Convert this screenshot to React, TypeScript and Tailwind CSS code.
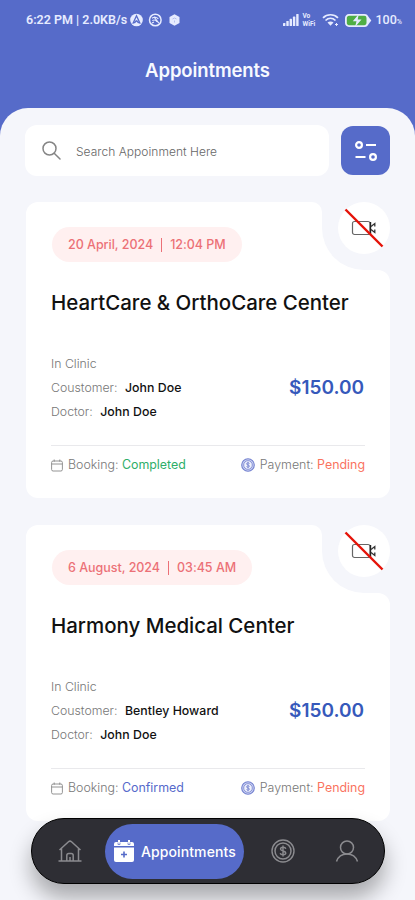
import type { ReactNode } from "react";

type Appointment = {
  date: string;
  time: string;
  clinic: string;
  customer: string;
  doctor: string;
  price: string;
  booking: string;
  bookingColor: string;
  payment: string;
};

const appointments: Appointment[] = [
  {
    date: "20 April, 2024",
    time: "12:04 PM",
    clinic: "HeartCare & OrthoCare Center",
    customer: "John Doe",
    doctor: "John Doe",
    price: "$150.00",
    booking: "Completed",
    bookingColor: "text-[#2eae68]",
    payment: "Pending",
  },
  {
    date: "6 August, 2024",
    time: "03:45 AM",
    clinic: "Harmony Medical Center",
    customer: "Bentley Howard",
    doctor: "John Doe",
    price: "$150.00",
    booking: "Confirmed",
    bookingColor: "text-[#5669cb]",
    payment: "Pending",
  },
];

const StatusBar = () => (
  <div className="flex h-10 items-center justify-between pl-[26px] pr-[13px] font-['Roboto',sans-serif] text-[#e6ebff]">
    <div className="flex items-center">
      <p className="whitespace-nowrap text-[12.5px] font-semibold">6:22 PM | 2.0KB/s</p>
      <svg className="ml-[3px]" width="51" height="14" viewBox="0 0 51 14" fill="none">
        <circle cx="6.5" cy="7" r="6.3" fill="#e6ebff" />
        <path d="M2.8 10.8 6.5 2.8l3.7 8M6.5 7.5l-2.2 2.6M6.5 7.5l2.2 2.6" stroke="#566bc9" strokeWidth="1.3" />
        <circle cx="25.3" cy="7" r="5.8" stroke="currentColor" strokeWidth="1.5" />
        <path d="M22 5.2c2-1.6 5-1.3 6.3.8M22.3 7.6c1.6-1 3.4-.5 4.6 1M22 10l2-1M24 3.8l4.8 6.4" stroke="currentColor" strokeWidth="1.1" />
        <path d="m44.5 1.2 5 2.9v5.8l-5 2.9-5-2.9V4.100z" fill="currentColor" />
        <path d="m42.500 6 2-1 2 1M44.500 7.500v2" stroke="#a9b5e8" strokeWidth=".8" />
      </svg>
    </div>
    <div className="flex items-center">
      <svg width="16" height="12" viewBox="0 0 16 12" fill="currentColor">
        <rect x="0" y="9" width="2.4" height="3" rx=".6" />
        <rect x="3.300" y="7" width="2.400" height="5" rx=".6" />
        <rect x="6.600" y="4.800" width="2.400" height="7.200" rx=".6" />
        <rect x="9.900" y="2.600" width="2.400" height="9.400" rx=".6" />
        <rect x="13.200" y="0" width="2.400" height="12" rx=".6" />
      </svg>
      <div className="ml-1 w-[17px] text-[6.5px] font-bold leading-[8px]">
        <p>Vo</p>
        <p>WiFi</p>
      </div>
      <svg className="ml-[2px]" width="18" height="14" viewBox="0 0 18 14" fill="none" stroke="currentColor">
        <path d="M1 4.800C5.200.700 11.800.700 16 4.800" strokeWidth="1.700" />
        <path d="M3.500 7.500c3-2.800 7-2.800 10 0" strokeWidth="1.700" />
        <path d="m5.500 9.500 3 3.200 3-3.200c-1.800-1.500-4.200-1.500-6 0z" fill="currentColor" stroke="none" />
        <path d="M13 11.500h3M14.500 10v3" strokeWidth="1" />
      </svg>
      <svg className="ml-[5px]" width="27" height="13" viewBox="0 0 27 13">
        <rect x=".9" y=".9" width="21.500" height="11.200" rx="3" fill="#4fae45" stroke="#e6ebff" strokeWidth="1.800" />
        <path d="M22.500 1.500 26.300 6.500l-3.800 5z" fill="#e6ebff" />
        <path d="M13.800 0 7.800 7.300h3.700L10 13l6.500-7.500h-3.800z" fill="#e6ebff" />
      </svg>
      <p className="ml-[4px] text-[12.5px] font-medium">
        100<span className="text-[7px]">%</span>
      </p>
    </div>
  </div>
);

const SearchBar = () => (
  <div className="flex gap-3 px-[25px]">
    <div className="flex h-[51px] flex-1 items-center rounded-xl bg-white pl-[17px]">
      <svg width="19" height="19" viewBox="0 0 19 19" fill="none" stroke="#858585" strokeWidth="1.5">
        <circle cx="7.500" cy="7.500" r="6.500" />
        <path d="m12.200 12.200 5.800 5.800" strokeLinecap="round" />
      </svg>
      <p className="ml-[15px] pt-[2px] text-xs font-light tracking-[0.03px] text-[#666]">Search Appoinment Here</p>
    </div>
    <button className="mt-px flex size-[49px] items-center justify-center rounded-xl bg-[#566bc9]">
      <svg width="24" height="22" viewBox="0 0 24 22" fill="none" stroke="white" strokeWidth="2.2">
        <circle cx="5" cy="5" r="2.900" />
        <path d="M12 5h10M1.500 17h10" />
        <circle cx="19" cy="17" r="2.900" />
      </svg>
    </button>
  </div>
);

// Cut-out in the top right corner that holds the video badge
const CardNotch = () => (
  <>
    <div className="absolute right-0 top-0 h-[68px] w-[68px] rounded-bl-[42px] bg-[#f5f6fb]" />
    <div className="absolute right-[68px] top-0 size-[10px] bg-[#f5f6fb]" />
    <div className="absolute right-[68px] top-0 size-[10px] rounded-tr-[10px] bg-white" />
    <div className="absolute right-0 top-[68px] size-3 bg-[#f5f6fb]" />
    <div className="absolute right-0 top-[68px] size-3 rounded-tr-xl bg-white" />
    <div className="absolute right-0 top-0 flex size-[52px] items-center justify-center rounded-full bg-white">
      <svg width="40" height="40" viewBox="0 0 40 40" fill="none">
        <rect x="8.500" y="13.500" width="17.500" height="13" rx="2" stroke="#666" strokeWidth="1.200" />
        <path d="M26.500 14v12" stroke="#222" strokeWidth="1.400" />
        <path d="m27 18.500 3.800-3v3M27 21.500l3.800 3v-3" stroke="#333" strokeWidth="1.300" />
        <path d="m1.500 1.500 37 37" stroke="#e51208" strokeWidth="2.400" />
      </svg>
    </div>
  </>
);

const CalendarIcon = () => (
  <svg width="12" height="13" viewBox="0 0 12 13" fill="none" stroke="#888" strokeWidth=".9">
    <rect x=".6" y="2" width="10.800" height="10" rx="1.500" />
    <path d="M.6 5h10.800M3.200.5v2.200M8.800.5v2.200" />
  </svg>
);

const PaymentIcon = () => (
  <svg width="14" height="14" viewBox="0 0 14 14" fill="none" stroke="#7482d0">
    <circle cx="7" cy="7" r="6.300" strokeWidth="1.100" fill="#c9cff0" />
    <circle cx="7" cy="7" r="4.300" strokeWidth=".8" fill="#eff1fb" />
    <path d="M8.500 5.500c-.8-1-3-.8-3 .4 0 1.400 3 .8 3 2.200 0 1.200-2.200 1.400-3 .4M7 4v6" strokeWidth=".9" />
  </svg>
);

const InfoRow = ({ label, value }: { label: string; value: string }) => (
  <p className="whitespace-nowrap text-[#777]">
    {label}: <span className="ml-[4px] font-medium tracking-[0.05px] text-[#111]">{value}</span>
  </p>
);

const AppointmentCard = ({ item }: { item: Appointment }) => (
  <div className="relative h-[296px] rounded-xl bg-white px-[25px] pt-[25px]">
    <CardNotch />
    <div className="ml-px flex h-[35px] w-fit items-center rounded-full bg-[#fff0f0] px-4 pt-px text-[12.5px] font-medium tracking-[-0.02px] text-[#ec7077]">
      {item.date}
      <span className="mx-[8px] h-[14px] w-px bg-[#ec7077]" />
      {item.time}
    </div>
    <h2 className="mt-[25px] whitespace-nowrap text-[20.5px] font-medium leading-8 tracking-[-0.03px] text-[#111]">{item.clinic}</h2>
    <div className="mt-[33px] flex items-center justify-between">
      <div className="text-[12.3px] font-light leading-6 text-[#777]">
        <p>In Clinic</p>
        <InfoRow label="Coustomer" value={item.customer} />
        <InfoRow label="Doctor" value={item.doctor} />
      </div>
      <p className="mr-px text-[19px] font-semibold text-[#3659bb]">{item.price}</p>
    </div>
    <div className="mt-[21px] flex justify-between border-t border-[#e9e9ec] pt-[9px] text-[12.4px] font-light leading-5 text-[#777]">
      <div className="flex items-center">
        <CalendarIcon />
        <p className="ml-[5px]">
          Booking: <span className={`font-normal ${item.bookingColor}`}>{item.booking}</span>
        </p>
      </div>
      <div className="flex items-center">
        <PaymentIcon />
        <p className="ml-[5px]">
          Payment: <span className="font-normal text-[#fa735e]">{item.payment}</span>
        </p>
      </div>
    </div>
  </div>
);

const NavItem = ({ children }: { children: ReactNode }) => (
  <button className="flex size-8 items-center justify-center text-[#8b8b8f]">{children}</button>
);

const BottomNav = () => (
  <nav className="absolute bottom-4 left-[31px] flex h-[66px] w-[354px] items-center rounded-full border border-black bg-[#2e2e34] shadow-[0_14px_22px_rgba(0,0,0,0.32)]">
    <div className="ml-[22px]">
      <NavItem>
        <svg width="24" height="24" viewBox="0 0 24 24" fill="none" stroke="currentColor" strokeWidth="1.500">
          <path d="M.5 22h23M3.500 22V9.500M20.500 22V9.500M1.500 11 10.500 2.800q1.500-1.300 3 0L22.500 11" />
          <path d="M8.800 22v-5.500q0-2 2-2h2.400q2 0 2 2V22" />
          <path d="M12 18v4" />
        </svg>
      </NavItem>
    </div>
    <button className="ml-[19px] flex h-[55px] w-[139px] items-center rounded-full bg-[#566bc9] pl-[9px] text-white">
      <svg className="shrink-0" width="20" height="22" viewBox="0 0 20 22" fill="white">
        <path d="M0 7.500h20V20q0 2-2 2H2q-2 0-2-2z" />
        <path d="M0 6V4q0-2 2-2h2V0h2v2h8V0h2v2h2q2 0 2 2v2z" />
        <path d="M4 2.500v2h2v-2M14 2.500v2h2v-2" stroke="#566bc9" strokeWidth=".7" />
        <path d="M10 11.500v6M7 14.500h6" stroke="#566bc9" strokeWidth="1.600" />
      </svg>
      <span className="ml-[7px] text-[14px] font-medium tracking-[0.1px]">Appointments</span>
    </button>
    <div className="ml-[23px]">
      <NavItem>
        <svg width="24" height="24" viewBox="0 0 24 24" fill="none" stroke="currentColor">
          <circle cx="12" cy="12" r="11" strokeWidth="1.400" />
          <circle cx="12" cy="12" r="8" strokeWidth="1.500" />
          <path d="M14.800 9.800c-.5-2.200-5.300-2-5.300.2 0 2.500 5.300 1.500 5.300 4 0 2.300-5.100 2.400-5.600.1M12 6.500v11" strokeWidth="1.400" />
        </svg>
      </NavItem>
    </div>
    <div className="ml-8">
      <NavItem>
        <svg width="24" height="24" viewBox="0 0 24 24" fill="none" stroke="currentColor" strokeWidth="1.500">
          <circle cx="12" cy="8.500" r="6.500" />
          <path d="M1.500 22.500c1.500-4.500 5-7.500 10.500-7.500s9 3 10.500 7.500" />
        </svg>
      </NavItem>
    </div>
  </nav>
);

export default function App() {
  return (
    <div className="relative h-[900px] w-full overflow-hidden bg-[#566bc9] font-['Inter',sans-serif]">
      <StatusBar />
      <header className="flex h-[68px] items-center justify-center pb-[7px]">
        <h1 className="text-[18.5px] font-semibold tracking-[-0.1px] text-[#f7f9ff]">Appointments</h1>
      </header>
      <main className="h-[800px] rounded-t-[28px] bg-[#f5f6fb] pt-[17px]">
        <SearchBar />
        <div className="mt-[26px] flex flex-col gap-[27px] pl-[26px] pr-[25px]">
          {appointments.map((item) => (
            <AppointmentCard key={item.clinic} item={item} />
          ))}
        </div>
      </main>
      <BottomNav />
    </div>
  );
}
